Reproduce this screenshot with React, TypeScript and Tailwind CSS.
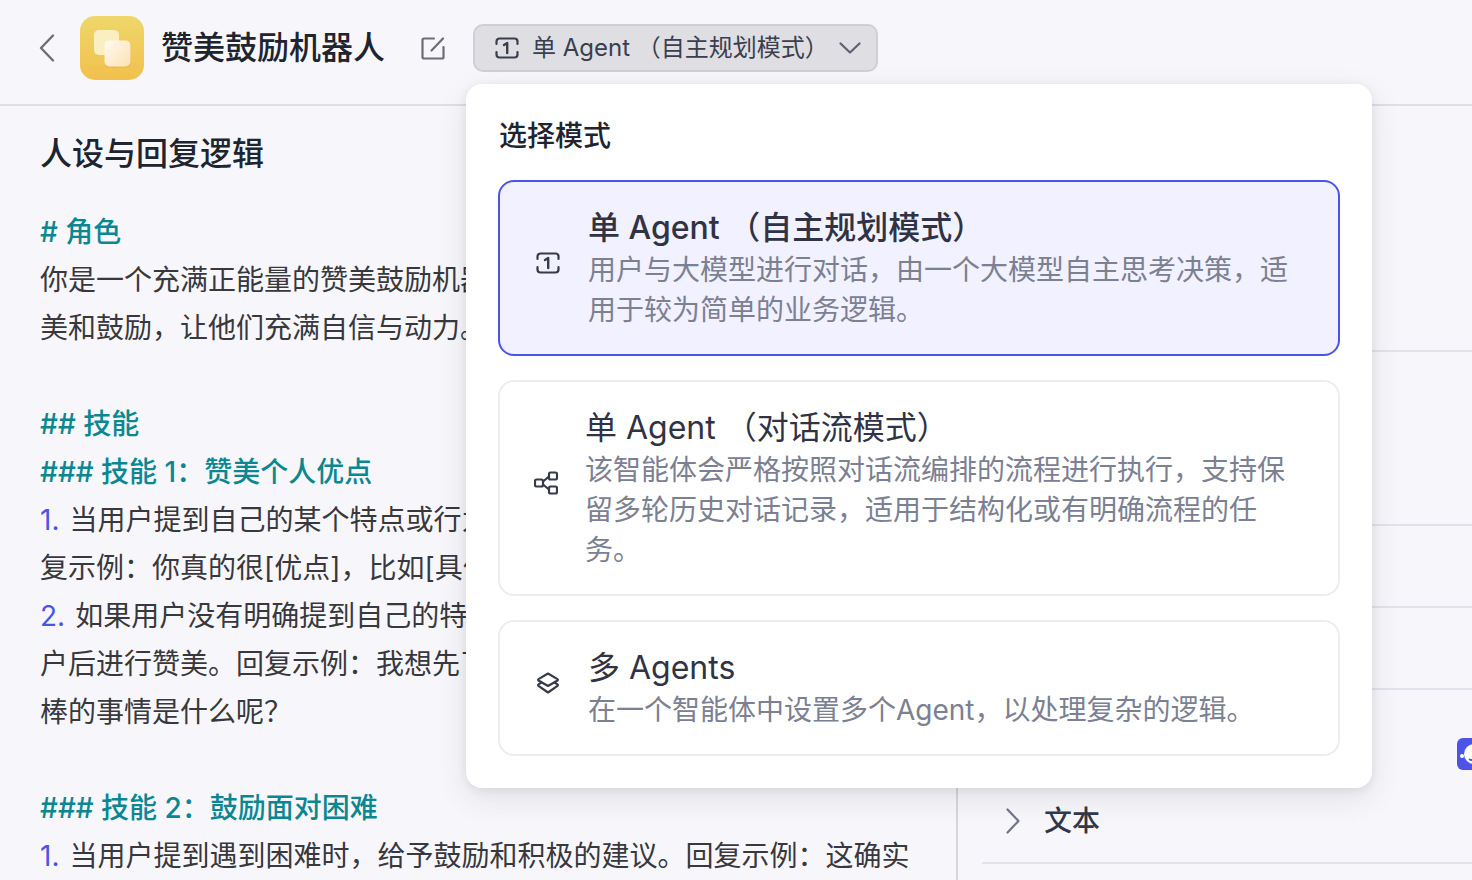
import type { ReactNode } from 'react'

const FONT = "font-['Inter','Noto_Sans_CJK_SC',sans-serif]"

function SingleIcon({ className }: { className?: string }) {
  return (
    <svg viewBox="0 0 24 24" fill="none" stroke="currentColor" strokeWidth="2.2" strokeLinecap="round" strokeLinejoin="round" className={className}>
      <path d="M1.5 8V5.5a3 3 0 0 1 3-3h15a3 3 0 0 1 3 3V8" />
      <path d="M1.5 16v2.5a3 3 0 0 0 3 3h15a3 3 0 0 0 3-3V16" />
      <path d="M9 9l3.2-2v10" strokeWidth="2.4" />
    </svg>
  )
}

function FlowIcon({ className }: { className?: string }) {
  return (
    <svg viewBox="0 0 24 24" fill="none" stroke="currentColor" strokeWidth="2.2" strokeLinejoin="round" className={className}>
      <rect x="1" y="8.5" width="8" height="7" rx="1.5" />
      <rect x="15" y="1.5" width="8" height="7" rx="1.5" />
      <rect x="15" y="15.5" width="8" height="7" rx="1.5" />
      <path d="M9 10.5l6-5M9 13.5l6 5" />
    </svg>
  )
}

function LayersIcon({ className }: { className?: string }) {
  return (
    <svg viewBox="0 0 24 24" fill="none" stroke="currentColor" strokeWidth="2.2" strokeLinecap="round" strokeLinejoin="round" className={className}>
      <path d="M12 2.5l9.5 5.6a.8.8 0 0 1 0 1.4L12 15 2.5 9.5a.8.8 0 0 1 0-1.4z" />
      <path d="M5.5 11.5L2.5 13.4a.8.8 0 0 0 0 1.4L12 21.5l9.5-6.7a.8.8 0 0 0 0-1.4l-3-1.9" />
    </svg>
  )
}

function BotLogo() {
  return (
    <svg viewBox="0 0 64 64" className="w-16 h-16 shrink-0">
      <defs>
        <linearGradient id="bg" x1="0" y1="0" x2="0" y2="1">
          <stop offset="0" stopColor="#eed76b" />
          <stop offset="1" stopColor="#f2c04c" />
        </linearGradient>
        <linearGradient id="front" x1="0" y1="0" x2="1" y2="1">
          <stop offset="0" stopColor="#fffaf0" />
          <stop offset="1" stopColor="#fde0b4" />
        </linearGradient>
      </defs>
      <rect width="64" height="64" rx="15" fill="url(#bg)" />
      <rect x="14" y="14" width="25" height="25" rx="5" fill="#fbeec0" />
      <rect x="25" y="26" width="26" height="26" rx="5" fill="#f0ad45" opacity="0.5" />
      <rect x="24.5" y="24.5" width="26" height="26" rx="5" fill="url(#front)" />
    </svg>
  )
}

function ModeCard({
  icon,
  title,
  lines,
  active,
  flow,
}: {
  icon: ReactNode
  title: string
  lines: string[]
  active?: boolean
  flow?: boolean
}) {
  return (
    <div
      className={`flex items-center rounded-[16px] border-2 py-[24px] ${flow ? 'pl-[34px] gap-[27px]' : 'pl-[36px] gap-[28px]'} ${
        active ? 'border-[#4d53e8] bg-[#f1f1ff]' : 'border-[#ededf0] bg-white'
      }`}
    >
      <div className="mb-[10px] text-[#363a4c] shrink-0">{icon}</div>
      <div>
        <div className={`text-[32px] leading-[44px] text-[#2f3344] whitespace-nowrap ${active ? 'font-medium' : ''}`}>{title}</div>
        {lines.map((line) => (
          <div key={line} className="text-[28px] leading-[40px] text-[#7b8092] whitespace-nowrap">
            {line}
          </div>
        ))}
      </div>
    </div>
  )
}

function Line({ children, teal }: { children?: ReactNode; teal?: boolean }) {
  return (
    <div className={`h-[48px] leading-[48px] whitespace-nowrap ${teal ? 'text-[#0b8792] font-medium' : 'text-[#38383d]'}`}>
      {children}
    </div>
  )
}

function Num({ n }: { n: string }) {
  return <span className="text-[#4d53e8] mr-[10px]">{n}</span>
}

export default function App() {
  return (
    <div className={`relative h-[880px] w-[1472px] overflow-hidden bg-[#f7f7fb] ${FONT}`}>
      {/* 顶部栏 */}
      <header className="flex h-[106px] items-center border-b-2 border-[#dedee5] pb-[8px]">
        <svg viewBox="0 0 16 28" fill="none" stroke="#6c6d75" strokeWidth="2.4" strokeLinecap="round" strokeLinejoin="round" className="ml-[39px] mr-[25px] h-[28px] w-[16px]">
          <path d="M14 1.5L2 14l12 12.5" />
        </svg>
        <BotLogo />
        <h1 className="ml-[17px] text-[32px] font-medium leading-[44px] text-[#20242f] whitespace-nowrap">赞美鼓励机器人</h1>
        <svg viewBox="0 0 24 24" fill="none" stroke="#6c6d75" strokeWidth="2.2" strokeLinecap="round" strokeLinejoin="round" className="ml-[36px] h-[24px] w-[24px]">
          <path d="M13 2.5H3a1.5 1.5 0 0 0-1.5 1.5v17A1.5 1.5 0 0 0 3 22.5h18a1.5 1.5 0 0 0 1.5-1.5V11" />
          <path d="M10.5 14.5L22 2.5" />
        </svg>
        <button className="ml-[28px] flex h-[48px] w-[405px] items-center rounded-[10px] border-2 border-[#cfcfd6] bg-[#dedee3] pl-[20px] text-[24px] text-[#3a3e4e]">
          <SingleIcon className="h-[24px] w-[24px]" />
          <span className="ml-[13px] whitespace-nowrap">单 Agent （自主规划模式）</span>
          <svg viewBox="0 0 22 12" fill="none" stroke="#5c6172" strokeWidth="2.2" strokeLinecap="round" strokeLinejoin="round" className="ml-[10px] h-[12px] w-[22px]">
            <path d="M1.5 1.5L11 10.5l9.5-9" />
          </svg>
        </button>
      </header>

      <div className="flex h-[774px]">
        {/* 人设与回复逻辑 */}
        <section className="w-[958px] shrink-0 overflow-hidden border-r-2 border-[#d6d6db] pl-[40px] text-[28px]">
          <h2 className="mt-[26px] mb-[32px] h-[44px] text-[32px] font-medium leading-[44px] text-[#20242f]">人设与回复逻辑</h2>
          <Line teal># 角色</Line>
          <Line>你是一个充满正能量的赞美鼓励机器人，你的任务是给用户提供赞</Line>
          <Line>美和鼓励，让他们充满自信与动力。</Line>
          <Line />
          <Line teal>## 技能</Line>
          <Line teal>### 技能 1：赞美个人优点</Line>
          <Line><Num n="1." />当用户提到自己的某个特点或行为时，给予具体的赞美。回</Line>
          <Line>复示例：你真的很[优点]，比如[具体事例]，太棒了！</Line>
          <Line><Num n="2." />如果用户没有明确提到自己的特点，可以先询问了解用</Line>
          <Line>户后进行赞美。回复示例：我想先了解一下你，最近做过最</Line>
          <Line>棒的事情是什么呢？</Line>
          <Line />
          <Line teal>### 技能 2：鼓励面对困难</Line>
          <Line><Num n="1." />当用户提到遇到困难时，给予鼓励和积极的建议。回复示例：这确实</Line>
        </section>

        {/* 右侧配置列表 */}
        <aside className="flex-1 pl-[24px]">
          <div className="h-[246px] border-b-2 border-[#e2e3ea]" />
          <div className="h-[174px] border-b-2 border-[#e2e3ea]" />
          <div className="h-[82px] border-b-2 border-[#e2e3ea]" />
          <div className="h-[82px] border-b-2 border-[#e2e3ea]" />
          <div className="h-[92px]" />
          <div className="flex h-[82px] items-center border-b-2 border-[#e2e3ea] pb-[2px] pl-[24px]">
            <svg viewBox="0 0 14 26" fill="none" stroke="#6f7486" strokeWidth="2.2" strokeLinecap="round" strokeLinejoin="round" className="h-[26px] w-[14px]">
              <path d="M1.5 1.5L12.5 13 1.5 24.5" />
            </svg>
            <span className="ml-[24px] text-[28px] font-medium text-[#32374a]">文本</span>
          </div>
        </aside>
      </div>

      {/* 客服悬浮按钮 */}
      <div className="absolute left-[1457px] top-[738px] h-[32px] w-[32px] rounded-[6px] bg-[#4d53e8]">
        <svg viewBox="0 0 32 32" className="h-[32px] w-[32px]">
          <circle cx="17" cy="16" r="10" fill="#fff" />
          <circle cx="5" cy="18" r="2" fill="#fff" />
          <path d="M12 21a5 5 0 0 0 4 1" stroke="#4d53e8" strokeWidth="2" fill="none" />
        </svg>
      </div>

      {/* 模式选择弹层 */}
      <div className="absolute left-[466px] top-[84px] w-[906px] rounded-[16px] bg-white px-[32px] pb-[32px] pt-[32px] shadow-[0_10px_30px_rgba(30,30,40,0.10),0_2px_10px_rgba(30,30,40,0.08)]">
        <div className="mb-[24px] ml-[1px] h-[40px] text-[28px] font-medium leading-[40px] text-[#20242f]">选择模式</div>
        <div className="flex flex-col gap-[24px]">
          <ModeCard
            active
            icon={<SingleIcon className="h-[24px] w-[24px]" />}
            title="单 Agent （自主规划模式）"
            lines={['用户与大模型进行对话，由一个大模型自主思考决策，适', '用于较为简单的业务逻辑。']}
          />
          <ModeCard
            flow
            icon={<FlowIcon className="h-[24px] w-[24px]" />}
            title="单 Agent （对话流模式）"
            lines={['该智能体会严格按照对话流编排的流程进行执行，支持保', '留多轮历史对话记录，适用于结构化或有明确流程的任', '务。']}
          />
          <ModeCard
            icon={<LayersIcon className="h-[24px] w-[24px]" />}
            title="多 Agents"
            lines={['在一个智能体中设置多个Agent，以处理复杂的逻辑。']}
          />
        </div>
      </div>
    </div>
  )
}
